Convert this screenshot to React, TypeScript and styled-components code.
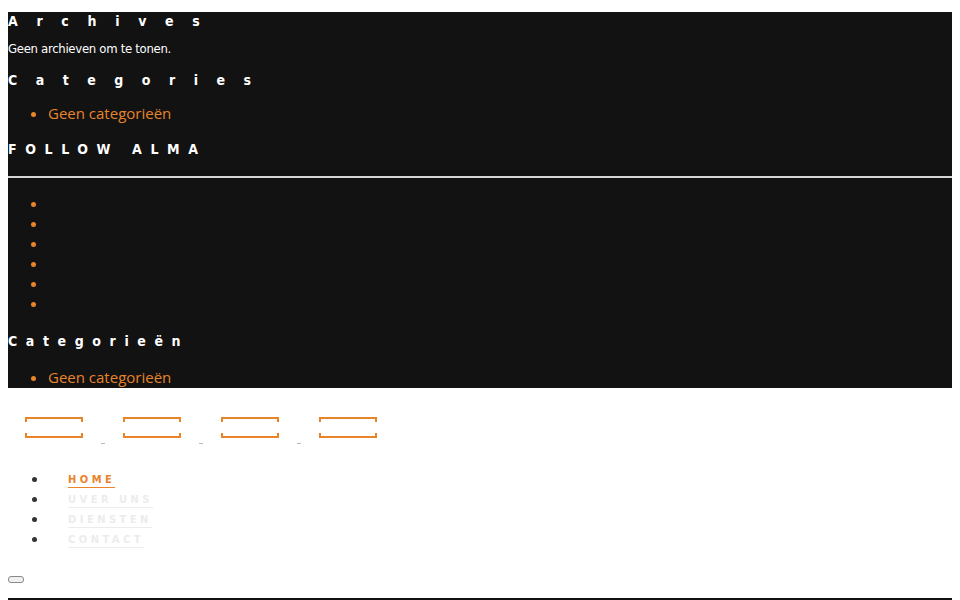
import React from "react";
import styled, { createGlobalStyle } from "styled-components";

const GlobalStyle = createGlobalStyle`
  body {
    margin: 8px;
    background: #ffffff;
    font-family: "Open Sans", sans-serif;
  }
`;

const ORANGE = "#e8842a";

const Sidebar = styled.aside`
  margin-top: 4px;
  background: #121212;
  color: #ffffff;
  overflow: hidden;
`;

const WidgetTitle = styled.h2<{ $spacing: number; $upper?: boolean }>`
  margin: 0;
  font-family: "DejaVu Sans Condensed", sans-serif;
  font-weight: 700;
  font-size: 14px;
  line-height: 18px;
  letter-spacing: ${(p) => p.$spacing}px;
  text-transform: ${(p) => (p.$upper ? "uppercase" : "none")};
  color: #ffffff;
`;

const EmptyNote = styled.p`
  margin: 9px 0 0;
  font-family: "DejaVu Sans Condensed", sans-serif;
  font-size: 13px;
  letter-spacing: -0.3px;
  line-height: 20px;
  color: #ffffff;
`;

const Widget = styled.section<{ $gap?: number }>`
  margin-top: ${(p) => p.$gap ?? 0}px;
`;

const OrangeList = styled.ul<{ $top: number }>`
  margin: ${(p) => p.$top}px 0 0;
  padding-left: 40px;
  color: ${ORANGE};
`;

const OrangeItem = styled.li`
  font-family: "Open Sans", sans-serif;
  font-size: 15px;
  line-height: 21px;
  color: ${ORANGE};
`;

const EmptyItem = styled.li`
  height: 20px;
  line-height: 20px;
  font-size: 15px;
`;

const Divider = styled.hr`
  margin: 18px 0 15px;
  border: 0;
  height: 2px;
  background: #d6d6d6;
`;

const SocialRow = styled.div`
  display: flex;
  align-items: flex-start;
  gap: 18px;
  margin-top: 29px;
  padding-left: 17px;
`;

const SocialBox = styled.a`
  position: relative;
  display: block;
  width: 54px;
  height: 17px;
  border: 2px solid ${ORANGE};

  &::before {
    content: "";
    position: absolute;
    left: -2px;
    right: -2px;
    top: 3px;
    bottom: 3px;
    background: #ffffff;
  }
`;

const SocialMark = styled.span`
  display: block;
  width: 4px;
  height: 1px;
  margin-top: 26px;
  background: #b9b9b9;
`;

const NavList = styled.ul`
  margin: 25px 0 0;
  padding-left: 40px;
  color: #333;
`;

const NavItem = styled.li`
  height: 20px;
  line-height: 20px;
  font-size: 13px;
`;

const NavLink = styled.a<{ $active?: boolean }>`
  margin-left: 20px;
  font-family: "DejaVu Sans Condensed", sans-serif;
  font-weight: 700;
  font-size: 11px;
  line-height: 12px;
  letter-spacing: 3.5px;
  text-transform: uppercase;
  text-decoration: none;
  color: ${(p) => (p.$active ? ORANGE : "#ececec")};
  border-bottom: 1px solid ${(p) => (p.$active ? ORANGE : "#ececec")};
  padding-bottom: 1px;
  vertical-align: 1px;
`;

const MenuToggle = styled.button`
  display: block;
  margin-top: 27px;
  width: 16px;
  height: 7px;
  padding: 0;
  border: 1px solid #8a8a8a;
  border-radius: 3px;
  background: #f0f0f0;
`;

const FooterBar = styled.div`
  margin-top: 15px;
  height: 40px;
  background: #121212;
`;

const navItems = [
  { label: "Home", active: true },
  { label: "Uver uns" },
  { label: "Diensten" },
  { label: "Contact" },
];

export default function App() {
  return (
    <>
      <GlobalStyle />
      <Sidebar>
        <Widget>
          <WidgetTitle $spacing={18.7}>Archives</WidgetTitle>
          <EmptyNote>Geen archieven om te tonen.</EmptyNote>
        </Widget>
        <Widget $gap={12}>
          <WidgetTitle $spacing={18.5}>Categories</WidgetTitle>
          <OrangeList $top={14}>
            <OrangeItem>Geen categorieën</OrangeItem>
          </OrangeList>
        </Widget>
        <Widget $gap={16}>
          <WidgetTitle $spacing={8.6} $upper>
            Follow Alma
          </WidgetTitle>
          <Divider />
          <OrangeList $top={0}>
            {Array.from({ length: 6 }).map((_, i) => (
              <EmptyItem key={i} />
            ))}
          </OrangeList>
        </Widget>
        <Widget $gap={19}>
          <WidgetTitle $spacing={8.6}>Categorieën</WidgetTitle>
          <OrangeList $top={17}>
            <OrangeItem>Geen categorieën</OrangeItem>
          </OrangeList>
        </Widget>
      </Sidebar>
      <SocialRow>
        <SocialBox />
        <SocialMark />
        <SocialBox />
        <SocialMark />
        <SocialBox />
        <SocialMark />
        <SocialBox />
      </SocialRow>
      <NavList>
        {navItems.map((item) => (
          <NavItem key={item.label}>
            <NavLink href="#" $active={item.active}>
              {item.label}
            </NavLink>
          </NavItem>
        ))}
      </NavList>
      <MenuToggle aria-label="menu" />
      <FooterBar />
    </>
  );
}
